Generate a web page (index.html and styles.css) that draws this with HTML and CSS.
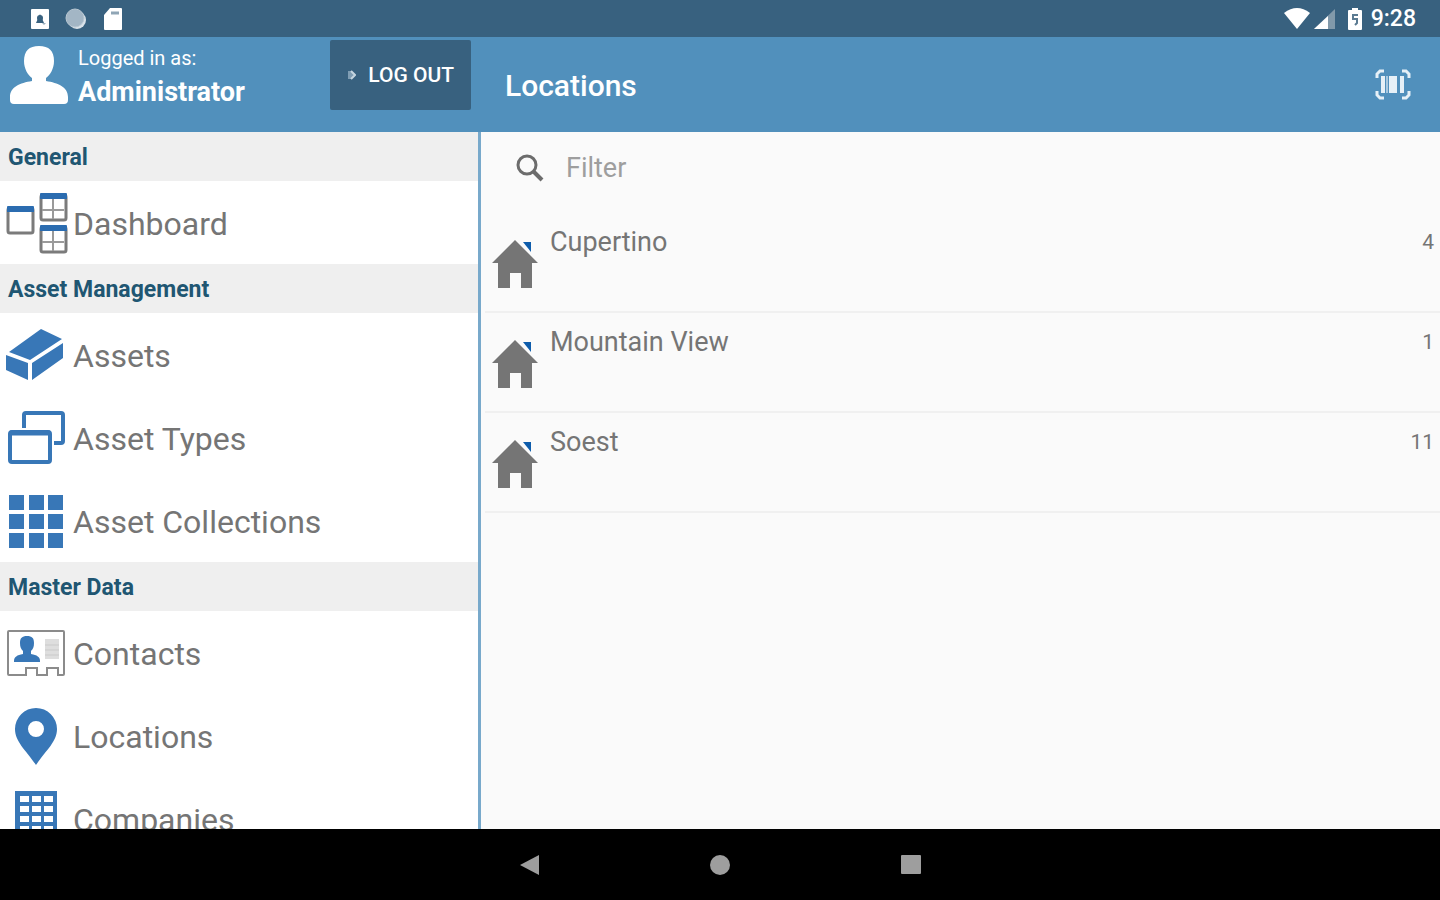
FILE: index.html
```
<!DOCTYPE html>
<html lang="en">
<head>
    <meta charset="UTF-8">
    <meta name="viewport" content="width=device-width, initial-scale=1">
    <title>Locations</title>
    <link rel="stylesheet" href="styles.css">
</head>
<body>
    <div class="status-bar">
        <div class="status-group status-left">
            <svg width="18" height="20" viewBox="0 0 18 20">
                <rect width="18" height="20" rx="1" fill="#fff"/>
                <path d="M9 5l4 9H5z" fill="#38617f"/>
                <circle cx="9" cy="9" r="3" fill="#38617f"/>
                <path d="M11 14l2 2 2-2z" fill="#9bb0bf"/>
            </svg>
            <svg width="22" height="22" viewBox="0 0 22 22">
                <circle cx="12" cy="12" r="9" fill="#d9e2e9"/>
                <circle cx="10" cy="10" r="9" fill="#a3b6c5"/>
                <circle cx="10" cy="10" r="9" fill="none" stroke="#b8c7d2"/>
            </svg>
            <svg width="20" height="24" viewBox="0 0 20 24">
                <path d="M7 1h11q1 0 1 1v20q0 1-1 1H2q-1 0-1-1V8z" fill="#fff"/>
                <path d="M8 6h8" stroke="#8fa5b5" stroke-width="3"/>
            </svg>
        </div>
        <div class="status-group status-right">
            <svg width="26" height="21" viewBox="0 0 26 21">
                <path d="M0 5Q13-5 26 5L13 21z" fill="#fff"/>
            </svg>
            <svg width="21" height="20" viewBox="0 0 21 20">
                <path d="M21 0v20H0z" fill="#8199aa"/>
                <path d="M14 7v13H0z" fill="#fff"/>
            </svg>
            <svg class="battery" width="14" height="22" viewBox="0 0 14 22">
                <path d="M4 0h6v2h3q1 0 1 1v18q0 1-1 1H1q-1 0-1-1V3q0-1 1-1h3z" fill="#fff"/>
                <path d="M10 7H5v4h4v4l-2 2" fill="none" stroke="#5b7b92" stroke-width="2"/>
            </svg>
            <span class="clock">9:28</span>
        </div>
    </div>

    <header class="app-bar">
        <div class="account">
            <svg class="avatar" width="58" height="59" viewBox="0 0 58 59">
                <path d="M29 0C39 0 44 5 44 15C44 23 40 29 36 32V35C48 37 58 41 58 51V54Q58 58 54 58H4Q0 58 0 54V51C0 41 10 37 22 35V32C18 29 14 23 14 15C14 5 19 0 29 0z" fill="#fff"/>
            </svg>
            <div class="account-text">
                <span class="account-label">Logged in as:</span>
                <span class="account-name">Administrator</span>
            </div>
            <button class="logout-button" type="button">
                <svg width="9" height="11" viewBox="0 0 9 11">
                    <path d="M1 1h3l4 4-4 4H1z" fill="#7f9db3"/>
                    <path d="M4 1l4 4-4 4" fill="none" stroke="#c5d5e0" stroke-width="2"/>
                </svg>
                LOG OUT
            </button>
        </div>
        <h1 class="page-title">Locations</h1>
        <button class="scan-button" type="button" aria-label="Scan barcode">
            <svg width="36" height="31" viewBox="0 0 36 31">
                <path d="M2 9V5l3-3h4M27 2h4l3 3v4M34 22v4l-3 3h-4M9 29H5l-3-3v-4" fill="none" stroke="#e6f0f7" stroke-width="3"/>
                <path d="M6 7h4v17H6zM14 7h8v17h-8zM25 7h4v17h-4z" fill="#e6f0f7"/>
                <path d="M11 7h2v17h-2z" fill="#a9c8df"/>
            </svg>
        </button>
    </header>

    <div class="content">
        <nav class="sidebar">
            <h2 class="section-title">General</h2>
            <a class="nav-item" href="#dashboard">
                <svg class="nav-icon" viewBox="0 0 60 60">
                    <g fill="#fff" stroke="#7b7b7b" stroke-width="3">
                        <rect x="2" y="14" width="25" height="25" rx="2"/>
                        <rect x="35" y="1" width="25" height="25" rx="2"/>
                        <rect x="35" y="33" width="25" height="25" rx="2"/>
                    </g>
                    <path d="M47 5v20M36 16h22M47 37v20M36 48h22" stroke="#9a9a9a" stroke-width="2"/>
                    <path d="M2 12h25q1 0 1 1v5H1v-5q0-1 1-1zM35-1h25q1 0 1 1v5H34V0q0-1 1-1zM35 31h25q1 0 1 1v5H34v-5q0-1 1-1z" fill="#2b6cb0"/>
                </svg>
                Dashboard
            </a>
            <h2 class="section-title">Asset Management</h2>
            <a class="nav-item" href="#assets">
                <svg class="nav-icon" viewBox="0 0 60 60">
                    <path d="M35 3L56 13L24 34L3 26zM0 29L22 37V54L0 44zM26 37L57 17V32L26 54z" fill="#3877b7"/>
                </svg>
                Assets
            </a>
            <a class="nav-item" href="#asset-types">
                <svg class="nav-icon" viewBox="0 0 60 60">
                    <g fill="none" stroke="#3877b7" stroke-width="4">
                        <rect x="4" y="23" width="40" height="30" rx="2"/>
                        <path d="M18 19V6q0-2 2-2h35q2 0 2 2v26q0 2-2 2h-7"/>
                        <path d="M4 24h40" stroke-width="5"/>
                    </g>
                </svg>
                Asset Types
            </a>
            <a class="nav-item" href="#asset-collections">
                <svg class="nav-icon" viewBox="0 0 60 60">
                    <path d="M3 3h15v15H3zM23 3h15v15H23zM42 3h15v15H42zM3 22h15v15H3zM23 22h15v15H23zM42 22h15v15H42zM3 41h15v15H3zM23 41h15v15H23zM42 41h15v15H42z" fill="#3877b7"/>
                </svg>
                Asset Collections
            </a>
            <h2 class="section-title">Master Data</h2>
            <a class="nav-item" href="#contacts">
                <svg class="nav-icon" viewBox="0 0 60 60">
                    <path d="M3 7h54q1 0 1 1v42q0 1-1 1h-5v-7H41v7H31v-7H20v7H3q-1 0-1-1V8q0-1 1-1z" fill="#fff" stroke="#8b8b8b" stroke-width="2"/>
                    <path d="M21 12c5 0 7 2 7 7 0 4-1 6-3 8v3c6 1 9 3 9 7v1H8v-1c0-4 3-6 9-7v-3c-2-2-3-4-3-8 0-5 2-7 7-7z" fill="#3877b7"/>
                    <path d="M39 15h14v20H39z" fill="#dedede"/>
                    <path d="M39 21h14M39 26h14M39 31h14" stroke="#cacaca"/>
                </svg>
                Contacts
            </a>
            <a class="nav-item" href="#locations">
                <svg class="nav-icon" viewBox="0 0 60 60">
                    <path d="M30 1a21 21 0 0 0-21 21C9 35 20 43 30 58C40 43 51 35 51 22A21 21 0 0 0 30 1zm0 13a8 8 0 1 1 0 16a8 8 0 0 1 0-16z" fill="#3877b7" fill-rule="evenodd"/>
                </svg>
                Locations
            </a>
            <a class="nav-item" href="#companies">
                <svg class="nav-icon" viewBox="0 0 60 60">
                    <path d="M9 1h42v56H9z" fill="#3877b7"/>
                    <path d="M14 6h9v6h-9zM26 6h9v6h-9zM38 6h9v6h-9zM14 16h9v6h-9zM26 16h9v6h-9zM38 16h9v6h-9zM14 26h9v6h-9zM26 26h9v6h-9zM38 26h9v6h-9zM14 36h9v6h-9zM26 36h9v6h-9zM38 36h9v6h-9z" fill="#fff"/>
                </svg>
                Companies
            </a>
        </nav>

        <main class="locations">
            <label class="filter">
                <svg width="28" height="28" viewBox="0 0 28 28">
                    <circle cx="11" cy="11" r="9" fill="none" stroke="#6c6c6c" stroke-width="3"/>
                    <path d="M17 17l9 9" stroke="#6c6c6c" stroke-width="4"/>
                </svg>
                <input class="filter-input" type="text" placeholder="Filter" aria-label="Filter">
            </label>
            <ul class="location-list">
                <li class="location">
                    <svg class="house" width="46" height="50" viewBox="0 0 46 50">
                        <path d="M31 3h8v10z" fill="#0d5cab"/>
                        <path d="M23 1L46 24H40V49H29V34H18V49H6V24H0z" fill="#757575"/>
                    </svg>
                    <span class="location-name">Cupertino</span>
                    <span class="location-count">4</span>
                </li>
                <li class="location">
                    <svg class="house" width="46" height="50" viewBox="0 0 46 50">
                        <path d="M31 3h8v10z" fill="#0d5cab"/>
                        <path d="M23 1L46 24H40V49H29V34H18V49H6V24H0z" fill="#757575"/>
                    </svg>
                    <span class="location-name">Mountain View</span>
                    <span class="location-count">1</span>
                </li>
                <li class="location">
                    <svg class="house" width="46" height="50" viewBox="0 0 46 50">
                        <path d="M31 3h8v10z" fill="#0d5cab"/>
                        <path d="M23 1L46 24H40V49H29V34H18V49H6V24H0z" fill="#757575"/>
                    </svg>
                    <span class="location-name">Soest</span>
                    <span class="location-count">11</span>
                </li>
            </ul>
        </main>
    </div>

    <div class="system-nav">
        <button class="system-button" type="button" aria-label="Back">
            <svg width="20" height="20" viewBox="0 0 20 20"><path d="M20 0v20L1 10z" fill="#9e9e9e"/></svg>
        </button>
        <button class="system-button" type="button" aria-label="Home">
            <svg width="20" height="20" viewBox="0 0 20 20"><circle cx="10" cy="10" r="10" fill="#9e9e9e"/></svg>
        </button>
        <button class="system-button" type="button" aria-label="Recent apps">
            <svg width="20" height="20" viewBox="0 0 20 20"><rect width="20" height="19" rx="1" fill="#9e9e9e"/></svg>
        </button>
    </div>
</body>
</html>
```
FILE: styles.css
```
* {
    box-sizing: border-box;
}

body {
    margin: 0;
    height: 100vh;
    display: flex;
    flex-direction: column;
    overflow: hidden;
    font-family: Roboto, sans-serif;
    color: #757575;
    background: #fafafa;
}

svg {
    display: block;
    flex: none;
}

button {
    font-family: inherit;
    border: none;
    cursor: pointer;
}

.status-bar {
    display: flex;
    flex: none;
    justify-content: space-between;
    align-items: center;
    height: 37px;
    padding: 0 24px 0 31px;
    background: #38617f;
}

.status-group {
    display: flex;
    align-items: center;
}

.status-left {
    gap: 16px;
}

.status-right {
    gap: 4px;
}

.battery {
    margin: 0 5px 0 9px;
}

.clock {
    color: #fff;
    font-size: 23px;
    font-weight: 500;
}

.app-bar {
    display: flex;
    flex: none;
    height: 95px;
    background: #5190bc;
    color: #fff;
}

.account {
    display: flex;
    align-items: flex-start;
    width: 33.33%;
    padding: 3px 9px 0 10px;
}

.avatar {
    margin-top: 6px;
}

.account-text {
    display: flex;
    flex: 1;
    flex-direction: column;
    padding: 1px 0 0 10px;
}

.account-label {
    font-size: 20px;
    line-height: 34px;
}

.account-name {
    font-size: 27px;
    font-weight: 700;
    line-height: 34px;
}

.logout-button {
    display: flex;
    align-items: center;
    gap: 12px;
    height: 70px;
    padding: 0 17px;
    border-radius: 2px;
    background: #38617f;
    color: #fff;
    font-size: 21px;
    font-weight: 500;
}

.page-title {
    flex: 1;
    align-self: center;
    margin: 0;
    padding: 2px 0 0 25px;
    font-size: 30px;
    font-weight: 500;
}

.scan-button {
    padding: 0 29px;
    background: none;
}

.content {
    display: flex;
    flex: 1;
    min-height: 0;
}

.sidebar {
    width: 33.4%;
    border-right: 3px solid #78a9cb;
    background: #fff;
    overflow: hidden;
}

.section-title {
    margin: 0;
    padding: 3px 0 0 8px;
    background: #efefef;
    color: #205672;
    font-size: 23px;
    font-weight: 700;
    line-height: 46px;
}

.nav-item {
    display: flex;
    align-items: center;
    gap: 7px;
    height: 83px;
    padding: 3px 0 0 6px;
    color: #757575;
    font-size: 32px;
    text-decoration: none;
}

.nav-icon {
    width: 60px;
    height: 60px;
    overflow: visible;
}

.locations {
    flex: 1;
    background: #fafafa;
}

.filter {
    display: flex;
    align-items: center;
    gap: 22px;
    height: 71px;
    padding: 0 35px;
}

.filter-input {
    flex: 1;
    min-width: 0;
    padding: 0;
    border: none;
    outline: none;
    background: none;
    font-family: inherit;
    font-size: 27px;
    color: #757575;
}

.filter-input::placeholder {
    color: #9e9e9e;
}

.location-list {
    margin: 10px 0 0;
    padding: 0 0 0 4px;
    list-style: none;
}

.location {
    display: flex;
    gap: 12px;
    height: 100px;
    padding: 12px 6px 0 7px;
    border-bottom: 2px solid #f0f0f0;
}

.house {
    margin-top: 14px;
}

.location-name {
    flex: 1;
    font-size: 27px;
    line-height: 34px;
}

.location-count {
    font-size: 21px;
    line-height: 34px;
}

.system-nav {
    display: flex;
    flex: none;
    justify-content: center;
    height: 71px;
    background: #000;
}

.system-button {
    display: flex;
    justify-content: center;
    align-items: center;
    width: 191px;
    padding: 0;
    background: none;
}
```
